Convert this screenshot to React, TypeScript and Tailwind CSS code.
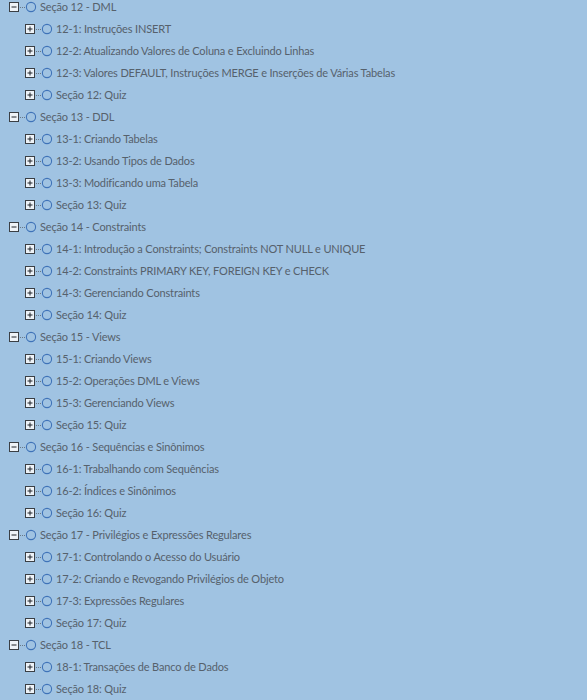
import React from "react";

type Section = { title: string; items: string[] };

const sections: Section[] = [
  {
    title: "Seção 12 - DML",
    items: [
      "12-1: Instruções INSERT",
      "12-2: Atualizando Valores de Coluna e Excluindo Linhas",
      "12-3: Valores DEFAULT, Instruções MERGE e Inserções de Várias Tabelas",
      "Seção 12: Quiz",
    ],
  },
  {
    title: "Seção 13 - DDL",
    items: [
      "13-1: Criando Tabelas",
      "13-2: Usando Tipos de Dados",
      "13-3: Modificando uma Tabela",
      "Seção 13: Quiz",
    ],
  },
  {
    title: "Seção 14 - Constraints",
    items: [
      "14-1: Introdução a Constraints; Constraints NOT NULL e UNIQUE",
      "14-2: Constraints PRIMARY KEY, FOREIGN KEY e CHECK",
      "14-3: Gerenciando Constraints",
      "Seção 14: Quiz",
    ],
  },
  {
    title: "Seção 15 - Views",
    items: [
      "15-1: Criando Views",
      "15-2: Operações DML e Views",
      "15-3: Gerenciando Views",
      "Seção 15: Quiz",
    ],
  },
  {
    title: "Seção 16 - Sequências e Sinônimos",
    items: ["16-1: Trabalhando com Sequências", "16-2: Índices e Sinônimos", "Seção 16: Quiz"],
  },
  {
    title: "Seção 17 - Privilégios e Expressões Regulares",
    items: [
      "17-1: Controlando o Acesso do Usuário",
      "17-2: Criando e Revogando Privilégios de Objeto",
      "17-3: Expressões Regulares",
      "Seção 17: Quiz",
    ],
  },
  {
    title: "Seção 18 - TCL",
    items: ["18-1: Transações de Banco de Dados", "Seção 18: Quiz"],
  },
];

function NodeIcon({ open }: { open: boolean }) {
  return (
    <svg width="28" height="22" viewBox="0 0 28 22" className="shrink-0">
      <rect x="0.5" y="6.5" width="9" height="9" fill="#eef3f8" stroke="#3a3f45" />
      <line x1="2.5" y1="11" x2="7.5" y2="11" stroke="#1f2328" />
      {!open && <line x1="5" y1="8.5" x2="5" y2="13.5" stroke="#1f2328" />}
      <rect x="11" y="11" width="1" height="1" fill="#6a7886" />
      <rect x="13" y="11" width="1" height="1" fill="#6a7886" />
      <rect x="15" y="11" width="1" height="1" fill="#6a7886" />
      <circle cx="22" cy="11" r="4.6" fill="none" stroke="#3f73b8" strokeWidth="1.1" />
    </svg>
  );
}

function Row({ label, open, child }: { label: string; open: boolean; child?: boolean }) {
  return (
    <div className={`flex h-[22px] items-center ${child ? "pl-[25px]" : "pl-[9px]"}`}>
      <NodeIcon open={open} />
      <span className="ml-[3px] whitespace-nowrap text-[11px] tracking-[-0.15px] text-[#56616c]">
        {label}
      </span>
    </div>
  );
}

export default function App() {
  return (
    <div
      className="min-h-screen overflow-hidden bg-[#a0c3e2]"
      style={{ fontFamily: "Lato, 'DejaVu Sans', sans-serif" }}
    >
      <div className="-mt-[4px] flex flex-col">
        {sections.map((s) => (
          <div key={s.title} className="flex flex-col">
            <Row label={s.title} open />
            {s.items.map((it) => (
              <Row key={it} label={it} open={false} child />
            ))}
          </div>
        ))}
      </div>
    </div>
  );
}
